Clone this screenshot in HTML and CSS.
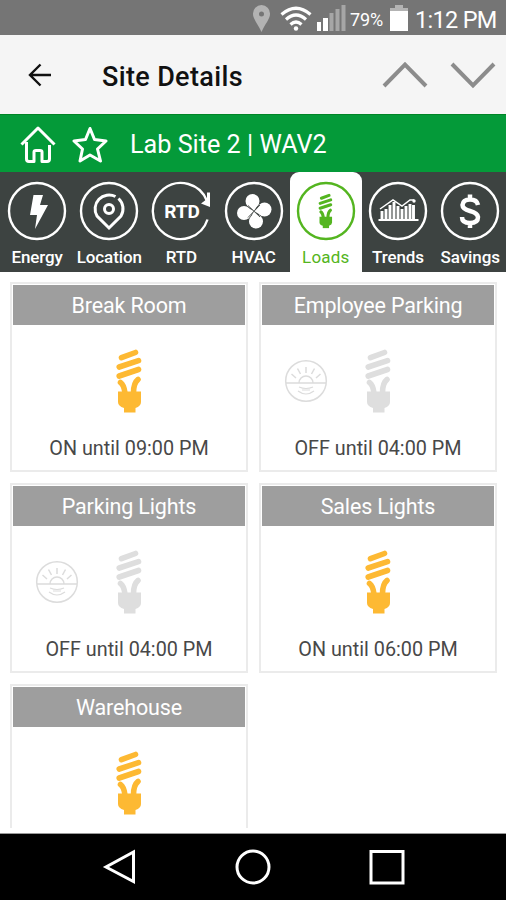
FILE: index.html
```html
<!DOCTYPE html>
<html lang="en">

<head>
    <meta charset="UTF-8">
    <meta name="viewport" content="width=device-width, initial-scale=1.0">
    <title>Site Details</title>
    <link rel="stylesheet" href="styles.css">
</head>

<body>
    <!-- Shared icons -->
    <svg class="sprite" width="0" height="0">
        <symbol id="bulb" viewBox="0 0 28 64">
            <g fill="none" stroke="currentColor" stroke-width="5.600" stroke-linecap="round">
                <path d="M6.500 8.700L20.500 3.500M4.200 18L23.500 11.700M4.200 27L23.500 20.500M5.500 33.500Q9 36 10 44M23 30.500Q18.500 34 18.500 44" />
            </g>
            <path d="M3 42.500H26V53Q26 57 20.500 59V63.500H9V59Q3 57 3 53Z" fill="currentColor" />
        </symbol>
        <symbol id="sun" viewBox="0 0 44 44">
            <g fill="none" stroke="currentColor" stroke-width="1.500">
                <circle cx="22" cy="22" r="20.300" />
                <path d="M2 24H42M15 24A7 7 0 0 1 29 24M22 14V8M16.500 15L13.500 9.500M27.500 15L30.500 9.500M12 19L7.500 15M32 19L36.500 15" />
                <path d="M15 28Q22 31 29 28M14 32Q22 38 30 32M18 31H26" stroke-width="1.200" />
            </g>
        </symbol>
    </svg>

    <div class="status-bar">
        <svg class="status-icons" width="88" height="35" viewBox="252 0 88 35">
            <path d="M261.500 5a8.500 8.500 0 0 0-8.500 9c0 5 5 10 8.500 18c3.500-8 8.500-13 8.500-18a8.500 8.500 0 0 0-8.500-9zm0 6.500a2.500 2.500 0 1 1 0 5a2.500 2.500 0 0 1 0-5z" fill="#b3b3b3" fill-rule="evenodd" />
            <g fill="none" stroke="#fff" stroke-width="3.200">
                <path d="M281.500 14.500Q296 2 310.500 14.500M286 19.500Q296 10.500 306 19.500M290.500 24.500Q296 19.500 301.500 24.500" />
            </g>
            <circle cx="296" cy="28.500" r="2.200" fill="#fff" />
            <path d="M317 22h4v9h-4zM323 18h5v13h-5z" fill="#fff" />
            <path d="M329.500 13h4v18h-4zM335.500 9h4v22h-4z" fill="#a6a6a6" />
        </svg>
        <svg width="6" height="35" viewBox="0 0 6 35">
            <path d="M1.500 5h4v26h-4z" fill="#a6a6a6" />
        </svg>
        <span class="battery-text">79%</span>
        <svg class="battery" width="18" height="35" viewBox="0 0 18 35">
            <path d="M5 5h8v3h5v4H0V8h5z" fill="#b3b3b3" />
            <path d="M0 11h18v20H0z" fill="#fff" />
        </svg>
        <span class="clock">1:12 PM</span>
    </div>

    <div class="app-bar">
        <svg class="back" width="24" height="24" viewBox="0 0 24 24">
            <path d="M23 12H2M12.500 1.500L2 12L12.500 22.500" />
        </svg>
        <h1 class="page-title">Site Details</h1>
        <svg class="chevron" width="46" height="28" viewBox="0 0 46 28">
            <path d="M2 25L23 3.500L44 25" />
        </svg>
        <svg class="chevron" width="46" height="28" viewBox="0 0 46 28">
            <path d="M2 3L23 24.500L44 3" />
        </svg>
    </div>

    <div class="site-bar">
        <svg width="36" height="38" viewBox="0 0 36 38">
            <path d="M1.500 19.500L18 3L34.500 19.500M6.500 17V34Q6.500 36.500 9 36.500H14V27Q14 25.500 16 25.500H20Q22 25.500 22 27V36.500H27Q29.500 36.500 29.500 34V20" />
        </svg>
        <svg class="star" width="36" height="38" viewBox="0 0 36 38">
            <path d="M18 3.500L22.500 14.500L34 16L25.500 24L28.500 36L18 30L8 36L10.500 24L2 16L13.500 14.500Z" />
        </svg>
        <span class="site-name">Lab Site 2 | WAV2</span>
    </div>

    <div class="tabs">
        <div class="tab">
            <svg class="tab-icon" viewBox="0 0 60 60">
                <circle class="ring" cx="30" cy="30" r="28" />
                <path d="M26.500 14H36L33 24H41L28 48L30 34H23Z" fill="#fff" />
            </svg>
            <span>Energy</span>
        </div>
        <div class="tab">
            <svg class="tab-icon" viewBox="0 0 60 60">
                <circle class="ring" cx="30" cy="30" r="28" />
                <g fill="none" stroke="#fff" stroke-width="3">
                    <path d="M39.500 17.500A14 14 0 0 1 42 35L30 47L18 35A14 14 0 0 1 36.500 15.500" />
                    <circle cx="30" cy="28" r="4.500" />
                </g>
            </svg>
            <span>Location</span>
        </div>
        <div class="tab">
            <svg class="tab-icon" viewBox="0 0 60 60">
                <path class="ring" d="M56.500 38.500A28 28 0 1 1 56 20" />
                <path d="M56 11.500H59V26L50 22.500L56 18Z" fill="#fff" />
                <text class="rtd" x="31" y="36.500">RTD</text>
            </svg>
            <span>RTD</span>
        </div>
        <div class="tab">
            <svg class="tab-icon" viewBox="0 0 60 60">
                <circle class="ring" cx="30" cy="30" r="28" />
                <g fill="#fff">
                    <circle cx="28.500" cy="20" r="7" />
                    <circle cx="40.500" cy="28.500" r="7" />
                    <circle cx="32" cy="40.500" r="7" />
                    <circle cx="20" cy="32" r="7" />
                    <path d="M23 24L30 30L35 22ZM38 23L30 30L38 35ZM26 38L30 30L37 37ZM22 26L30 30L24 38Z" />
                </g>
                <path d="M24 24.500L36 36M36 24L24 36.500" stroke="#3d4341" stroke-width="0.900" />
            </svg>
            <span>HVAC</span>
        </div>
        <div class="tab active">
            <svg class="tab-icon" viewBox="0 0 60 60">
                <circle class="ring" cx="30" cy="30" r="28" />
                <use href="#bulb" x="21" y="12.500" width="17" height="35" />
            </svg>
            <span>Loads</span>
        </div>
        <div class="tab">
            <svg class="tab-icon" viewBox="0 0 60 60">
                <circle class="ring" cx="30" cy="30" r="28" />
                <path d="M10.500 39H50.500" stroke="#fff" stroke-width="1.800" />
                <path d="M14 38V30M18 38V28M22 38V24M26 38V21M30 38V25M34 38V28M38 38V25M42 38V23M45.500 38V24" stroke="#fff" stroke-width="2.900" />
                <path d="M12 28L25 19L34 25L42 19H46" fill="none" stroke="#fff" stroke-width="1.500" />
                <circle cx="46" cy="20" r="1.700" fill="#fff" />
            </svg>
            <span>Trends</span>
        </div>
        <div class="tab">
            <svg class="tab-icon" viewBox="0 0 60 60">
                <circle class="ring" cx="30" cy="30" r="28" />
                <path d="M38 24Q37 18.500 30 18.500T22.500 24Q22.500 28 30 30T38 36Q38 42 30 42T22 36M30 13.500V18M30 42V47" fill="none" stroke="#fff" stroke-width="4.500" />
            </svg>
            <span>Savings</span>
        </div>
    </div>

    <div class="loads">
        <div class="card on">
            <h2>Break Room</h2>
            <div class="card-icons"><svg class="bulb"><use href="#bulb" /></svg></div>
            <p>ON until 09:00 PM</p>
        </div>
        <div class="card">
            <h2>Employee Parking</h2>
            <div class="card-icons"><svg class="sun"><use href="#sun" /></svg><svg class="bulb"><use href="#bulb" /></svg></div>
            <p>OFF until 04:00 PM</p>
        </div>
        <div class="card">
            <h2>Parking Lights</h2>
            <div class="card-icons"><svg class="sun"><use href="#sun" /></svg><svg class="bulb"><use href="#bulb" /></svg></div>
            <p>OFF until 04:00 PM</p>
        </div>
        <div class="card on">
            <h2>Sales Lights</h2>
            <div class="card-icons"><svg class="bulb"><use href="#bulb" /></svg></div>
            <p>ON until 06:00 PM</p>
        </div>
        <div class="card on">
            <h2>Warehouse</h2>
            <div class="card-icons"><svg class="bulb"><use href="#bulb" /></svg></div>
        </div>
    </div>

    <div class="nav-bar">
        <svg width="36" height="36" viewBox="0 0 36 36"><path d="M32.500 3V32.500L5 18Z" /></svg>
        <svg width="36" height="36" viewBox="0 0 36 36"><circle cx="18" cy="18" r="16" /></svg>
        <svg width="36" height="36" viewBox="0 0 36 36"><path d="M2 2.500H34V34H2Z" /></svg>
    </div>
</body>

</html>
```
FILE: styles.css
```css
body {
    margin: 0;
    height: 900px;
    display: flex;
    flex-direction: column;
    overflow: hidden;
    background: #fff;
    font-family: Roboto, "Liberation Sans", sans-serif;
}

svg {
    display: block;
    flex: none;
}

.sprite {
    display: none;
}

/* Android status bar */
.status-bar {
    display: flex;
    align-items: center;
    justify-content: flex-end;
    height: 35px;
    flex: none;
    padding-right: 9px;
    background: #757575;
    color: #fff;
    white-space: nowrap;
}

.battery-text {
    width: 34px;
    margin: 3px 6px 0 4px;
    font-size: 18px;
    letter-spacing: -0.1px;
}

.clock {
    width: 82px;
    margin: 4px 0 0 7px;
    font-size: 23.5px;
    letter-spacing: -0.7px;
}

/* Title bar */
.app-bar {
    display: flex;
    align-items: center;
    height: 79px;
    flex: none;
    padding: 0 10px 0 28px;
    box-sizing: border-box;
    background: #f5f5f5;
}

.back {
    fill: none;
    stroke: #111;
    stroke-width: 2.4;
}

.page-title {
    flex: 1;
    margin: 4px 0 0 50px;
    font-size: 27px;
    font-weight: 500;
    letter-spacing: 0.35px;
    color: #111;
}

.chevron {
    margin-left: 22px;
    fill: none;
    stroke: #8c8c8c;
    stroke-width: 4;
}

/* Green bar */
.site-bar {
    display: flex;
    align-items: center;
    height: 58px;
    flex: none;
    padding-left: 20px;
    box-sizing: border-box;
    border-top: 1px solid #008526;
    background: #049a39;
    color: #fff;
}

.site-bar svg {
    fill: none;
    stroke: #fff;
    stroke-width: 3;
    stroke-linejoin: round;
}

.star {
    margin-left: 16px;
}

.site-name {
    margin: 2px 0 0 22px;
    font-size: 25.2px;
}

/* Tabs */
.tabs {
    display: grid;
    grid-template-columns: repeat(7, 72.2px);
    height: 100px;
    flex: none;
    padding-left: 1px;
    box-sizing: border-box;
    background: #3d4341;
    color: #fff;
}

.tab {
    display: flex;
    flex-direction: column;
    align-items: center;
    padding-top: 9px;
    font-size: 17px;
    font-weight: 500;
    line-height: 22px;
    letter-spacing: -0.1px;
}

.tab-icon {
    width: 60px;
    height: 60px;
    margin-bottom: 5px;
    letter-spacing: 0;
}

.ring {
    fill: none;
    stroke: currentColor;
    stroke-width: 2.4;
}

.rtd {
    fill: #fff;
    font-size: 19px;
    font-weight: 700;
    text-anchor: middle;
}

.tab.active {
    border-radius: 9px 9px 0 0;
    background: #fff;
    color: #54b520;
    font-weight: 400;
    letter-spacing: 0.2px;
}

/* Load cards */
.loads {
    display: grid;
    grid-template-columns: 238px 238px;
    grid-auto-rows: 190px;
    gap: 11px;
    height: 556px;
    flex: none;
    padding: 10px 0 0 10px;
    box-sizing: border-box;
    overflow: hidden;
}

.card {
    box-sizing: border-box;
    padding: 1px;
    border: 2px solid #ebebeb;
    text-align: center;
    color: #dedede;
}

.card.on {
    color: #fdb933;
}

.card h2 {
    margin: 0;
    font-size: 21.5px;
    font-weight: 400;
    line-height: 42px;
    height: 40px;
    letter-spacing: -0.15px;
    background: #9e9e9e;
    color: #fff;
}

.card-icons {
    position: relative;
    display: flex;
    justify-content: center;
    padding-top: 24px;
}

.bulb {
    width: 28px;
    height: 64px;
}

/* daylight badge sits beside the centred bulb */
.sun {
    position: absolute;
    left: 22px;
    top: 34px;
    width: 44px;
    height: 44px;
    color: #dcdcdc;
}

.card p {
    margin: 23px 0 0;
    font-size: 19.8px;
    line-height: 26px;
    color: #484848;
}

/* Android navigation */
.nav-bar {
    display: flex;
    justify-content: center;
    gap: 98px;
    height: 67px;
    flex: none;
    margin-top: 5px;
    padding-top: 15px;
    box-sizing: border-box;
    border-top: 1px solid #999;
    background: #000;
}

.nav-bar svg {
    fill: none;
    stroke: #fff;
    stroke-width: 3;
}
```
